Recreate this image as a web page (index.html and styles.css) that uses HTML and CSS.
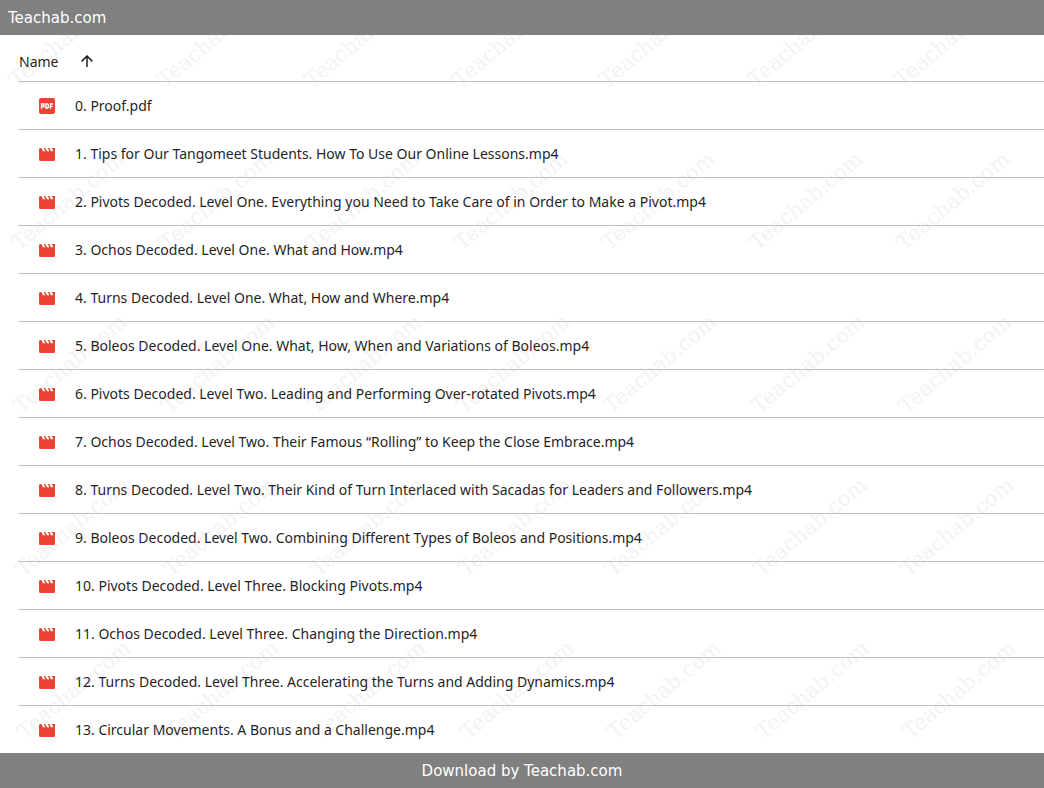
FILE: index.html
```html
<!DOCTYPE html>
<html lang="en">
<head>
    <meta charset="UTF-8">
    <meta name="viewport" content="width=device-width, initial-scale=1.0">
    <title>Teachab.com</title>
    <link rel="stylesheet" href="styles.css">
</head>
<body>
    <!-- icons -->
    <svg class="defs" aria-hidden="true">
        <symbol id="icon-video" viewBox="2 4 20 16" preserveAspectRatio="none">
            <path fill="#ea4335" d="M18 4l2 4h-3l-2-4h-2l2 4h-3l-2-4H8l2 4H7L5 4H4c-1.100 0-2 .9-2 2v12c0 1.100.9 2 2 2h16c1.100 0 2-.9 2-2V4h-4z"/>
        </symbol>
        <symbol id="icon-pdf" viewBox="0 0 16 16">
            <rect width="16" height="16" rx="2" fill="#ea4335"/>
            <g fill="none" stroke="#fff" stroke-width="1.400">
                <path d="M2.600 10.800V6H4.900v2.500H2.600"/>
                <path d="M6.900 6h1.500l1 .9v2.200l-1 .9H6.900z"/>
                <path d="M11.400 10.800V6H14M11.400 8.400h2.200"/>
            </g>
        </symbol>
    </svg>

    <header class="bar">Teachab.com</header>

    <main class="files">
        <!-- watermark -->
        <svg class="watermark" aria-hidden="true">
            <defs>
                <text id="mark" transform="rotate(-40)">Teachab.com</text>
                <g id="mark-row">
                    <use href="#mark" x="0"/>
                    <use href="#mark" x="148"/>
                    <use href="#mark" x="295"/>
                    <use href="#mark" x="443"/>
                    <use href="#mark" x="590"/>
                    <use href="#mark" x="738"/>
                    <use href="#mark" x="885"/>
                    <use href="#mark" x="1036"/>
                    <use href="#mark" x="1183"/>
                    <use href="#mark" x="1331"/>
                    <use href="#mark" x="1478"/>
                    <use href="#mark" x="1626"/>
                    <use href="#mark" x="1773"/>
                </g>
            </defs>
            <use href="#mark-row" x="17" y="53"/>
            <use href="#mark-row" x="19" y="216"/>
            <use href="#mark-row" x="21" y="379"/>
            <use href="#mark-row" x="23" y="542"/>
            <use href="#mark-row" x="25" y="705"/>
        </svg>

        <table class="file-list">
            <thead>
                <tr>
                    <th colspan="2">
                        <button class="sort" type="button">
                            Name
                            <svg width="12" height="12" viewBox="0 0 12 12" fill="none" stroke="#1f1f1f" stroke-width="1.500">
                                <path d="M6 12V1M.6 6.400L6 1l5.400 5.400"/>
                            </svg>
                        </button>
                    </th>
                </tr>
            </thead>
            <tbody>
                <tr>
                    <td class="icon"><svg width="16" height="16"><use href="#icon-pdf"/></svg></td>
                    <td>0. Proof.pdf</td>
                </tr>
                <tr>
                    <td class="icon"><svg width="16" height="13"><use href="#icon-video"/></svg></td>
                    <td>1. Tips for Our Tangomeet Students. How To Use Our Online Lessons.mp4</td>
                </tr>
                <tr>
                    <td class="icon"><svg width="16" height="13"><use href="#icon-video"/></svg></td>
                    <td>2. Pivots Decoded. Level One. Everything you Need to Take Care of in Order to Make a Pivot.mp4</td>
                </tr>
                <tr>
                    <td class="icon"><svg width="16" height="13"><use href="#icon-video"/></svg></td>
                    <td>3. Ochos Decoded. Level One. What and How.mp4</td>
                </tr>
                <tr>
                    <td class="icon"><svg width="16" height="13"><use href="#icon-video"/></svg></td>
                    <td>4. Turns Decoded. Level One. What, How and Where.mp4</td>
                </tr>
                <tr>
                    <td class="icon"><svg width="16" height="13"><use href="#icon-video"/></svg></td>
                    <td>5. Boleos Decoded. Level One. What, How, When and Variations of Boleos.mp4</td>
                </tr>
                <tr>
                    <td class="icon"><svg width="16" height="13"><use href="#icon-video"/></svg></td>
                    <td>6. Pivots Decoded. Level Two. Leading and Performing Over-rotated Pivots.mp4</td>
                </tr>
                <tr>
                    <td class="icon"><svg width="16" height="13"><use href="#icon-video"/></svg></td>
                    <td>7. Ochos Decoded. Level Two. Their Famous “Rolling” to Keep the Close Embrace.mp4</td>
                </tr>
                <tr>
                    <td class="icon"><svg width="16" height="13"><use href="#icon-video"/></svg></td>
                    <td>8. Turns Decoded. Level Two. Their Kind of Turn Interlaced with Sacadas for Leaders and Followers.mp4</td>
                </tr>
                <tr>
                    <td class="icon"><svg width="16" height="13"><use href="#icon-video"/></svg></td>
                    <td>9. Boleos Decoded. Level Two. Combining Different Types of Boleos and Positions.mp4</td>
                </tr>
                <tr>
                    <td class="icon"><svg width="16" height="13"><use href="#icon-video"/></svg></td>
                    <td>10. Pivots Decoded. Level Three. Blocking Pivots.mp4</td>
                </tr>
                <tr>
                    <td class="icon"><svg width="16" height="13"><use href="#icon-video"/></svg></td>
                    <td>11. Ochos Decoded. Level Three. Changing the Direction.mp4</td>
                </tr>
                <tr>
                    <td class="icon"><svg width="16" height="13"><use href="#icon-video"/></svg></td>
                    <td>12. Turns Decoded. Level Three. Accelerating the Turns and Adding Dynamics.mp4</td>
                </tr>
                <tr>
                    <td class="icon"><svg width="16" height="13"><use href="#icon-video"/></svg></td>
                    <td>13. Circular Movements. A Bonus and a Challenge.mp4</td>
                </tr>
            </tbody>
        </table>
    </main>

    <footer class="bar bar-bottom">Download by Teachab.com</footer>
</body>
</html>
```
FILE: styles.css
```css
body {
    margin: 0;
    font-family: "Noto Sans", sans-serif;
    font-size: 14px;
    color: #1f1f1f;
    background-color: #fff;
}

.defs {
    display: none;
}

.bar {
    padding: 2px 8px 0;
    line-height: 33px;
    font-family: "DejaVu Sans", sans-serif;
    font-size: 15px;
    color: #fff;
    background-color: #808080;
}

.bar-bottom {
    text-align: center;
}

.files {
    position: relative;
    padding-left: 18px;
}

/* sits under the file list */
.watermark {
    position: absolute;
    top: 0;
    left: 0;
    width: 100%;
    height: 100%;
    font-family: "DejaVu Serif", serif;
    font-size: 21px;
    fill: #f3f3f3;
    pointer-events: none;
}

.file-list {
    position: relative;
    width: 100%;
    border-collapse: separate;
    border-spacing: 0;
}

.file-list th,
.file-list td {
    box-sizing: border-box;
    height: 48px;
    padding: 0;
    text-align: left;
    font-weight: normal;
    border-bottom: 1px solid #c0c0c0;
}

.file-list th {
    height: 47px;
    padding: 6px 0 0 1px;
}

.file-list tbody tr:last-child td {
    height: 47px;
    border-bottom: none;
}

.file-list .icon {
    width: 57px;
    padding: 1px 0 0 21px;
}

.icon svg {
    display: block;
}

.sort {
    display: flex;
    align-items: center;
    gap: 23px;
    padding: 0;
    border: none;
    background: none;
    font: inherit;
    color: inherit;
    cursor: pointer;
}
```
